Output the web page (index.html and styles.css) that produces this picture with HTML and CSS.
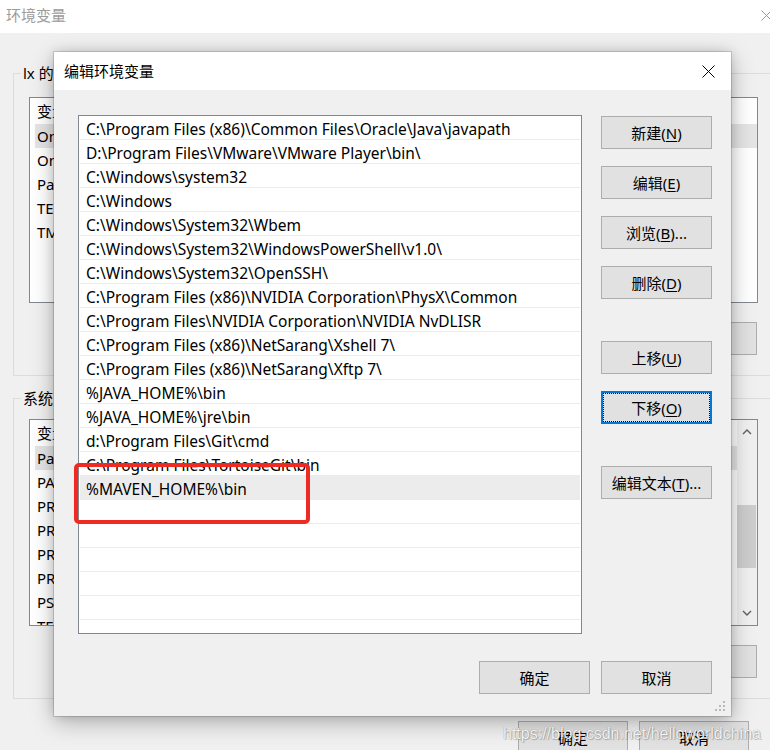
FILE: index.html
```html
<!DOCTYPE html>
<html lang="zh-CN">
<head>
<meta charset="utf-8">
<title>编辑环境变量</title>
<link rel="stylesheet" href="styles.css">
</head>
<body>
<div class="bgwin">
  <div class="bg-title">
    <span class="bg-title-text">环境变量</span>
    <svg class="bg-close" width="11" height="11" viewBox="0 0 11 11"><path d="M0.5 0.5L10.5 10.5M10.5 0.5L0.5 10.5" stroke="#9a9a9a" stroke-width="1" fill="none"/></svg>
  </div>
  <div class="bg-body">
    <div class="group group-user">
      <div class="group-label">lx 的用户变量(U)</div>
      <div class="bglist">
        <div class="bghead">变量</div>
        <div class="bgrow sel">OneDrive</div>
        <div class="bgrow">OneDriveConsumer</div>
        <div class="bgrow">Path</div>
        <div class="bgrow">TEMP</div>
        <div class="bgrow">TMP</div>
      </div>
      <div class="bg-btns">
        <div class="btn">新建(<u>N</u>)...</div>
        <div class="btn">编辑(<u>E</u>)...</div>
        <div class="btn">删除(<u>D</u>)</div>
      </div>
    </div>
    <div class="group group-sys">
      <div class="group-label">系统变量(S)</div>
      <div class="bglist sys">
        <div class="bglist-main">
          <div class="bghead">变量</div>
          <div class="bgrow sel">Path</div>
          <div class="bgrow">PATHEXT</div>
          <div class="bgrow">PROCESSOR_ARCHITECTURE</div>
          <div class="bgrow">PROCESSOR_IDENTIFIER</div>
          <div class="bgrow">PROCESSOR_LEVEL</div>
          <div class="bgrow">PROCESSOR_REVISION</div>
          <div class="bgrow">PSModulePath</div>
          <div class="bgrow">TEMP</div>
        </div>
        <div class="scrollbar">
          <div class="sb-arrow"><svg width="10" height="6" viewBox="0 0 10 6"><path d="M1 5L5 1L9 5" stroke="#606060" stroke-width="1.4" fill="none"/></svg></div>
          <div class="sb-track"><div class="sb-thumb"></div></div>
          <div class="sb-arrow"><svg width="10" height="6" viewBox="0 0 10 6"><path d="M1 1L5 5L9 1" stroke="#606060" stroke-width="1.4" fill="none"/></svg></div>
        </div>
      </div>
      <div class="bg-btns">
        <div class="btn">新建(<u>W</u>)...</div>
        <div class="btn">编辑(<u>I</u>)...</div>
        <div class="btn">删除(<u>L</u>)</div>
      </div>
    </div>
    <div class="bg-footer">
      <div class="btn">确定</div>
      <div class="btn">取消</div>
    </div>
  </div>
</div>

<div class="dialog">
  <div class="dlg-title">
    <span>编辑环境变量</span>
    <svg class="dlg-close" width="13" height="13" viewBox="0 0 13 13"><path d="M0.5 0.5L12.5 12.5M12.5 0.5L0.5 12.5" stroke="#000" stroke-width="1" fill="none"/></svg>
  </div>
  <div class="dlg-body">
    <div class="dlg-main">
      <div class="list">
        <div class="row">C:\Program Files (x86)\Common Files\Oracle\Java\javapath</div>
        <div class="row">D:\Program Files\VMware\VMware Player\bin\</div>
        <div class="row">C:\Windows\system32</div>
        <div class="row">C:\Windows</div>
        <div class="row">C:\Windows\System32\Wbem</div>
        <div class="row">C:\Windows\System32\WindowsPowerShell\v1.0\</div>
        <div class="row">C:\Windows\System32\OpenSSH\</div>
        <div class="row">C:\Program Files (x86)\NVIDIA Corporation\PhysX\Common</div>
        <div class="row">C:\Program Files\NVIDIA Corporation\NVIDIA NvDLISR</div>
        <div class="row">C:\Program Files (x86)\NetSarang\Xshell 7\</div>
        <div class="row">C:\Program Files (x86)\NetSarang\Xftp 7\</div>
        <div class="row">%JAVA_HOME%\bin</div>
        <div class="row">%JAVA_HOME%\jre\bin</div>
        <div class="row">d:\Program Files\Git\cmd</div>
        <div class="row">C:\Program Files\TortoiseGit\bin</div>
        <div class="row sel">%MAVEN_HOME%\bin</div>
        <div class="row"></div>
        <div class="row"></div>
        <div class="row"></div>
        <div class="row"></div>
        <div class="row"></div>
        <div class="row"></div>
      </div>
      <div class="side">
        <div class="btn">新建(<u>N</u>)</div>
        <div class="btn">编辑(<u>E</u>)</div>
        <div class="btn">浏览(<u>B</u>)...</div>
        <div class="btn">删除(<u>D</u>)</div>
        <div class="btn gap">上移(<u>U</u>)</div>
        <div class="btn focus">下移(<u>O</u>)</div>
        <div class="btn gap">编辑文本(<u>T</u>)...</div>
      </div>
    </div>
    <div class="dlg-footer">
      <div class="btn">确定</div>
      <div class="btn">取消</div>
    </div>
  </div>
  <svg class="grip" width="12" height="12" viewBox="0 0 12 12">
    <rect x="8" y="0" width="2" height="2" fill="#b9b9b9"/>
    <rect x="4" y="4" width="2" height="2" fill="#b9b9b9"/>
    <rect x="8" y="4" width="2" height="2" fill="#b9b9b9"/>
    <rect x="0" y="8" width="2" height="2" fill="#b9b9b9"/>
    <rect x="4" y="8" width="2" height="2" fill="#b9b9b9"/>
    <rect x="8" y="8" width="2" height="2" fill="#b9b9b9"/>
  </svg>
</div>

<div class="mark"></div>
<div class="watermark">https://blog.csdn.net/helloworldchina</div>
</body>
</html>
```

FILE: styles.css
```css
html, body {
  margin: 0;
  padding: 0;
  width: 770px;
  height: 750px;
  overflow: hidden;
  background: #f0f0f0;
  font-family: "Noto Sans", "Noto Sans CJK SC", sans-serif;
  font-size: 15px;
  color: #000;
}

/* ---------- background window ---------- */
.bgwin {
  width: 790px;
  height: 750px;
  background: #f0f0f0;
}
.bg-title {
  height: 33px;
  background: #fff;
  display: flex;
  align-items: center;
  justify-content: space-between;
  padding: 0 18px 0 6px;
}
.bg-title-text {
  color: #9c9c9c;
  font-size: 15px;
  line-height: 20px;
  margin-top: -3px;
}
.bg-close {
  margin-top: -3px;
}
.bg-body {
  padding-top: 40px;
}
.group {
  margin-left: 13px;
  width: 766px;
  border: 1px solid #dcdcdc;
  padding: 0 0 20px 15px;
  box-sizing: border-box;
}
.group-sys {
  margin-top: 22px;
  padding-bottom: 20px;
}
.group-label {
  display: block;
  width: fit-content;
  background: #f0f0f0;
  margin: -11px 0 0 -8px;
  padding: 0 2px;
  line-height: 20px;
  height: 20px;
}
.bglist {
  width: 729px;
  height: 206px;
  margin-top: 14px;
  box-sizing: border-box;
  border: 1px solid #828790;
  background: #fff;
  overflow: hidden;
}
.group-sys .bglist {
  margin-top: 11px;
  height: 207px;
  display: flex;
}
.bglist-main {
  flex: 1;
  overflow: hidden;
}
.bghead {
  height: 26px;
  line-height: 26px;
  padding-left: 7px;
}
.bgrow {
  height: 24px;
  line-height: 24px;
  margin-left: 5px;
  padding-left: 2px;
  white-space: nowrap;
}
.bgrow.sel {
  background: #e5e5e5;
}
.scrollbar {
  width: 20px;
  background: #f0f0f0;
  display: flex;
  flex-direction: column;
}
.sb-arrow {
  height: 24px;
  display: flex;
  align-items: center;
  justify-content: center;
}
.sb-track {
  flex: 1;
  padding-top: 61px;
}
.sb-thumb {
  margin: 0 1px 0 0;
  height: 63px;
  background: #cdcdcd;
}
.bg-btns {
  width: 728px;
  margin-top: 19px;
  display: flex;
  justify-content: flex-end;
  gap: 11px;
}
.bg-footer {
  display: flex;
  justify-content: flex-end;
  gap: 11px;
  padding: 22px 41px 0 0;
}
.bg-footer .btn {
  width: 110px;
}

/* ---------- buttons ---------- */
.btn {
  width: 111px;
  height: 33px;
  box-sizing: border-box;
  border: 1px solid #adadad;
  background: #e1e1e1;
  display: flex;
  align-items: center;
  justify-content: center;
  font-size: 15px;
  white-space: nowrap;
}
.btn u {
  text-underline-offset: 2px;
}
.btn.focus {
  border: 2px solid #0078d7;
  outline: 1px dotted #000;
  outline-offset: -3px;
}

/* ---------- dialog ---------- */
.dialog {
  position: absolute;
  left: 54px;
  top: 52px;
  width: 677px;
  height: 664px;
  background: #f0f0f0;
  box-shadow: 0 0 0 1px rgba(0, 0, 0, 0.14), 0 6px 22px rgba(0, 0, 0, 0.28), 0 0 10px rgba(0, 0, 0, 0.12);
}
.dlg-title {
  height: 38px;
  background: #fff;
  display: flex;
  align-items: center;
  justify-content: space-between;
  padding: 0 16px 0 10px;
}
.dlg-title span {
  font-size: 15px;
  line-height: 20px;
}
.dlg-body {
  padding: 25px 19px 22px 24px;
}
.dlg-main {
  display: flex;
  gap: 19px;
}
.list {
  width: 504px;
  height: 519px;
  box-sizing: border-box;
  border: 1px solid #828790;
  background: #fff;
  overflow: hidden;
  padding: 0 1px;
}
.row {
  height: 24px;
  box-sizing: border-box;
  border-bottom: 1px solid #ebebeb;
  padding: 1px 0 0 6px;
  line-height: 24px;
  font-size: 15.5px;
  white-space: nowrap;
}
.row.sel {
  background: #ececec;
}
.side {
  display: flex;
  flex-direction: column;
  gap: 17px;
  padding-top: 1px;
}
.side .gap {
  margin-top: 25px;
}
.dlg-footer {
  margin-top: 27px;
  display: flex;
  justify-content: flex-end;
  gap: 11px;
}
.grip {
  position: absolute;
  right: 4px;
  bottom: 3px;
}

/* ---------- annotation ---------- */
.mark {
  position: absolute;
  left: 74px;
  top: 463px;
  width: 236px;
  height: 61px;
  box-sizing: border-box;
  border: 4px solid #ee2a22;
  border-radius: 5px;
}
.watermark {
  position: absolute;
  left: 503px;
  top: 724px;
  font-family: "Liberation Sans", Arial, sans-serif;
  font-size: 16px;
  line-height: 20px;
  color: rgba(255, 255, 255, 0.92);
  text-shadow: 0 0 1px rgba(0, 0, 0, 0.45), 1px 1px 1px rgba(0, 0, 0, 0.2);
  white-space: nowrap;
}
```
